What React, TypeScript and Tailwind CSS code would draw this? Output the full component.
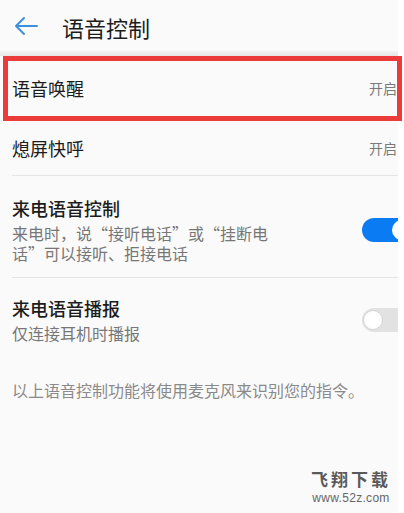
import React from "react";

const font = { fontFamily: '"Noto Sans CJK SC", "Noto Sans", sans-serif' };

function Toggle({ on }: { on: boolean }) {
  return (
    <div
      className={
        "relative h-[24px] w-[52px] shrink-0 rounded-full " +
        (on ? "bg-[#0a7bf2]" : "bg-[#e2e2e2]")
      }
    >
      <div
        className={
          "absolute top-[2px] h-[20px] w-[20px] rounded-full bg-white " +
          (on ? "right-[2px]" : "left-[1px] border border-[#d4d4d4]")
        }
      />
    </div>
  );
}

export default function App() {
  return (
    <div className="relative h-[513px] w-[404px] overflow-hidden bg-white" style={font}>
      <div className="h-full w-[398px] overflow-hidden bg-[#fafafa]">
        {/* header */}
        <div className="flex h-[51px] items-center">
          <div className="ml-[14px] flex w-[24px] items-center">
            <svg width="24" height="20" viewBox="0 0 24 20" fill="none">
              <path
                d="M23 10H2M10 2L2 10L10 18"
                stroke="#3f8fdf"
                strokeWidth="2"
                strokeLinecap="round"
                strokeLinejoin="round"
              />
            </svg>
          </div>
          <div className="ml-[24px] pt-[2px] text-[22px] leading-[28px] text-[#1c1c1c]">语音控制</div>
        </div>
        <div className="h-[5px] bg-gradient-to-b from-[#f3f3f3] to-[#e6e6e6]" />

        {/* row 1 */}
        <div className="flex h-[64px] items-center justify-between pl-[12px] pr-[1px]">
          <span className="text-[18px] leading-[24px] text-[#1c1c1c]">语音唤醒</span>
          <span className="text-[14px] leading-[20px] text-[#7a7a7a]">开启</span>
        </div>

        {/* row 2 */}
        <div className="ml-[12px] flex h-[56px] items-center justify-between border-b border-[#e4e4e4] pr-[1px]">
          <span className="text-[18px] leading-[24px] text-[#1c1c1c]">熄屏快呼</span>
          <span className="text-[14px] leading-[20px] text-[#7a7a7a]">开启</span>
        </div>

        {/* row 3 */}
        <div className="ml-[12px] flex items-center justify-between border-b border-[#e4e4e4] pb-[14px] pt-[20px]">
          <div className="w-[270px]">
            <div className="text-[18px] font-medium leading-[24px] text-[#1c1c1c]">来电语音控制</div>
            <div className="mt-[3px] text-[16px] leading-[20px] text-[#777777]">
              来电时，说“接听电话”或“挂断电话”可以接听、拒接电话
            </div>
          </div>
          <div className="w-[36px] shrink-0">
            <Toggle on={true} />
          </div>
        </div>

        {/* row 4 */}
        <div className="ml-[12px] flex items-center justify-between pb-[17px] pt-[18px]">
          <div>
            <div className="text-[18px] font-medium leading-[24px] text-[#1c1c1c]">来电语音播报</div>
            <div className="mt-[3px] text-[16px] leading-[20px] text-[#777777]">仅连接耳机时播报</div>
          </div>
          <div className="w-[36px] shrink-0">
            <Toggle on={false} />
          </div>
        </div>

        {/* footer */}
        <div className="mt-[19px] pl-[12px] text-[16px] leading-[22px] text-[#8a8a8a]">
          以上语音控制功能将使用麦克风来识别您的指令。
        </div>
      </div>

      {/* red annotation box */}
      <div className="absolute left-[3px] top-[56px] h-[65px] w-[399px] border-[5px] border-[#ec3b3b]" />

      {/* watermark */}
      <div className="absolute left-[310px] top-[468px] flex w-[82px] flex-col items-center">
        <div className="text-[17px] font-bold leading-[22px] tracking-[3px] text-[#5a5a5a]">飞翔下载</div>
        <div
          className="text-[12px] leading-[16px] tracking-[0.3px] text-[#666666]"
          style={{ fontFamily: '"Liberation Sans", Arial, sans-serif' }}
        >
          www.52z.com
        </div>
      </div>
    </div>
  );
}
